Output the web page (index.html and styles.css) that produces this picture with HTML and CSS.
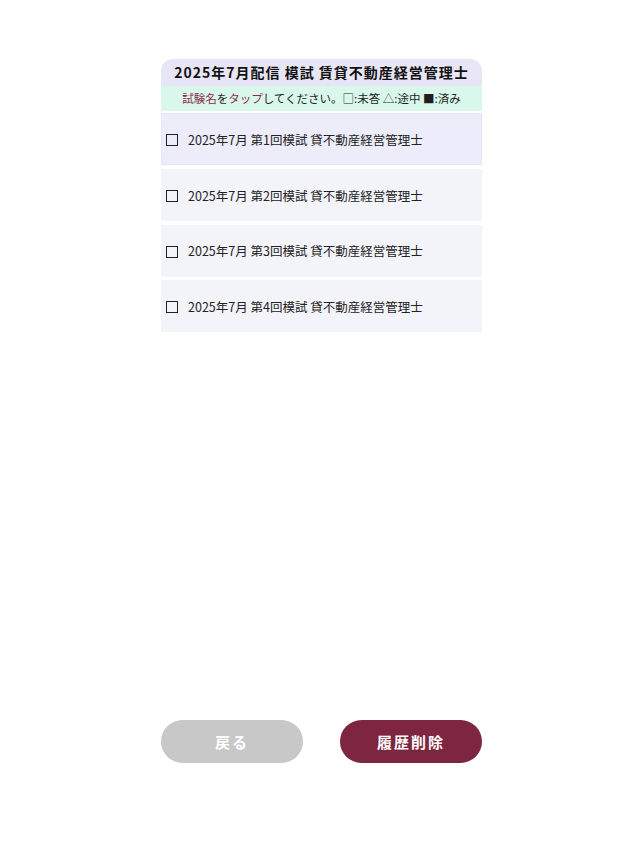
FILE: index.html
```html
<!DOCTYPE html>
<html lang="ja">
<head>
<meta charset="utf-8">
<link rel="stylesheet" href="styles.css">
</head>
<body>
<div class="page">
  <main class="panel">
    <h1 class="title">2025年7月配信 模試 賃貸不動産経営管理士</h1>
    <p class="hint"><span class="accent">試験名</span>を<span class="accent">タップ</span>してください。□:未答 △:途中 ■:済み</p>
    <ul class="list">
      <li class="row active"><span class="box"></span><span class="label">2025年7月 第1回模試 貸不動産経営管理士</span></li>
      <li class="row"><span class="box"></span><span class="label">2025年7月 第2回模試 貸不動産経営管理士</span></li>
      <li class="row"><span class="box"></span><span class="label">2025年7月 第3回模試 貸不動産経営管理士</span></li>
      <li class="row"><span class="box"></span><span class="label">2025年7月 第4回模試 貸不動産経営管理士</span></li>
    </ul>
  </main>
  <footer class="actions">
    <button class="btn back">戻る</button>
    <button class="btn clear">履歴削除</button>
  </footer>
</div>
</body>
</html>
```
FILE: styles.css
```css
* { box-sizing: border-box; }
html, body { margin: 0; padding: 0; background: #fff; }
body {
  font-family: "Noto Sans CJK JP", "Noto Sans", sans-serif;
  color: #222;
}
.page {
  width: 321px;
  margin: 0 auto;
  height: 858px;
  display: flex;
  flex-direction: column;
  padding-top: 59px;
  padding-bottom: 95px;
}
.panel { flex: 1; }
.title {
  margin: 0;
  height: 27px;
  background: #e8e6f6;
  border-radius: 12px 12px 0 0;
  font-size: 14px;
  font-weight: 700;
  letter-spacing: 1px;
  line-height: 27px;
  text-align: center;
  color: #111;
}
.hint {
  margin: 0;
  height: 25px;
  background: #d9f8eb;
  font-size: 11.5px;
  line-height: 25px;
  text-align: center;
  color: #1e1e1e;
}
.accent { color: #8a2c48; }
.list {
  list-style: none;
  margin: 2px 0 0;
  padding: 0;
  display: flex;
  flex-direction: column;
  gap: 3.8px;
}
.row {
  height: 52px;
  background: #f3f3fa;
  display: flex;
  align-items: center;
  padding-left: 5px;
  padding-top: 2px;
  gap: 10px;
  font-size: 12.5px;
}
.row.active {
  background: #edecfb;
  box-shadow: inset 0 0 0 1px #e6e4f6;
}
.box {
  width: 12px;
  height: 12px;
  border: 1.5px solid #222;
  flex: none;
}
.label { line-height: 1; }
.actions {
  display: flex;
  justify-content: space-between;
}
.btn {
  width: 142px;
  height: 43px;
  border: none;
  border-radius: 22px;
  font-family: "Noto Sans CJK JP", "Noto Sans", sans-serif;
  font-size: 15px;
  font-weight: 700;
  letter-spacing: 2px;
  color: #fff;
  padding: 0;
}
.back { background: #c8c8c8; }
.clear { background: #7e2540; }
```
